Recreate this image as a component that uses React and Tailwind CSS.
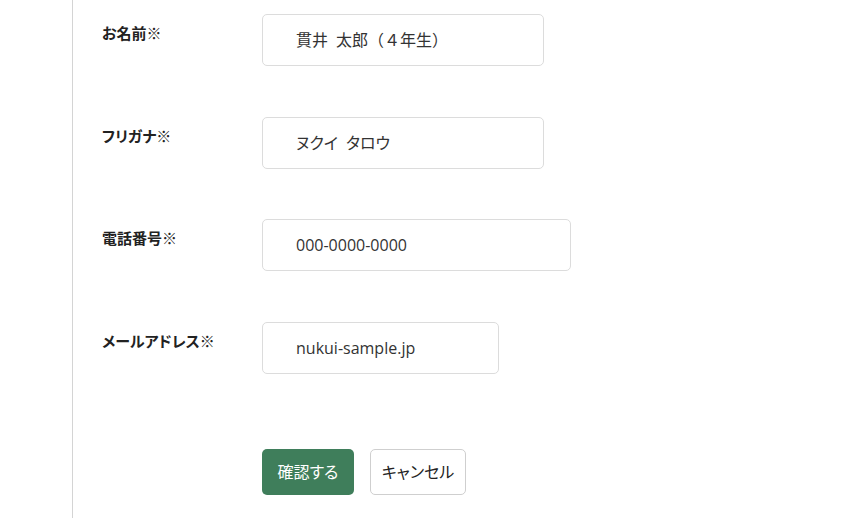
const fields = [
  { label: 'お名前※', value: '貫井\u2002太郎（４年生）', width: 'w-[282px]', palt: false },
  { label: 'フリガナ※', value: 'ヌクイ\u2002タロウ', width: 'w-[282px]', palt: true },
  { label: '電話番号※', value: '000-0000-0000', width: 'w-[309px]', palt: false },
  { label: 'メールアドレス※', value: 'nukui-sample.jp', width: 'w-[237px]', palt: false },
]

export default function App() {
  return (
    <div
      className="min-h-screen bg-white text-[#333]"
      style={{ fontFamily: '"Open Sans", "Noto Sans CJK JP", sans-serif' }}
    >
      <div className="ml-[72px] min-h-screen border-l border-[#d4d4d4] pl-[29px] pt-[14px]">
        <div className="flex flex-col gap-[50.6px]">
          {fields.map((f) => (
            <div key={f.label} className="flex">
              <div className="w-[160px] pt-[8px] text-[15px] font-bold leading-[22px] text-[#222] [font-feature-settings:'palt']">
                {f.label}
              </div>
              <div
                className={`${f.width} ${f.palt ? "[font-feature-settings:'palt']" : ''} flex h-[52px] items-center rounded-[5px] border border-[#dcdcdc] bg-white pl-[33px] text-[16px]`}
              >
                {f.value}
              </div>
            </div>
          ))}
        </div>
        <div className="mt-[75px] flex gap-[16px] pl-[160px] [font-feature-settings:'palt']">
          <button className="h-[46px] w-[92px] rounded-[5px] bg-[#3f7e5b] text-[16px] text-white">
            確認する
          </button>
          <button className="h-[46px] w-[96px] rounded-[5px] border border-[#cfcfcf] bg-white text-[16px] text-[#222]">
            キャンセル
          </button>
        </div>
      </div>
    </div>
  )
}
